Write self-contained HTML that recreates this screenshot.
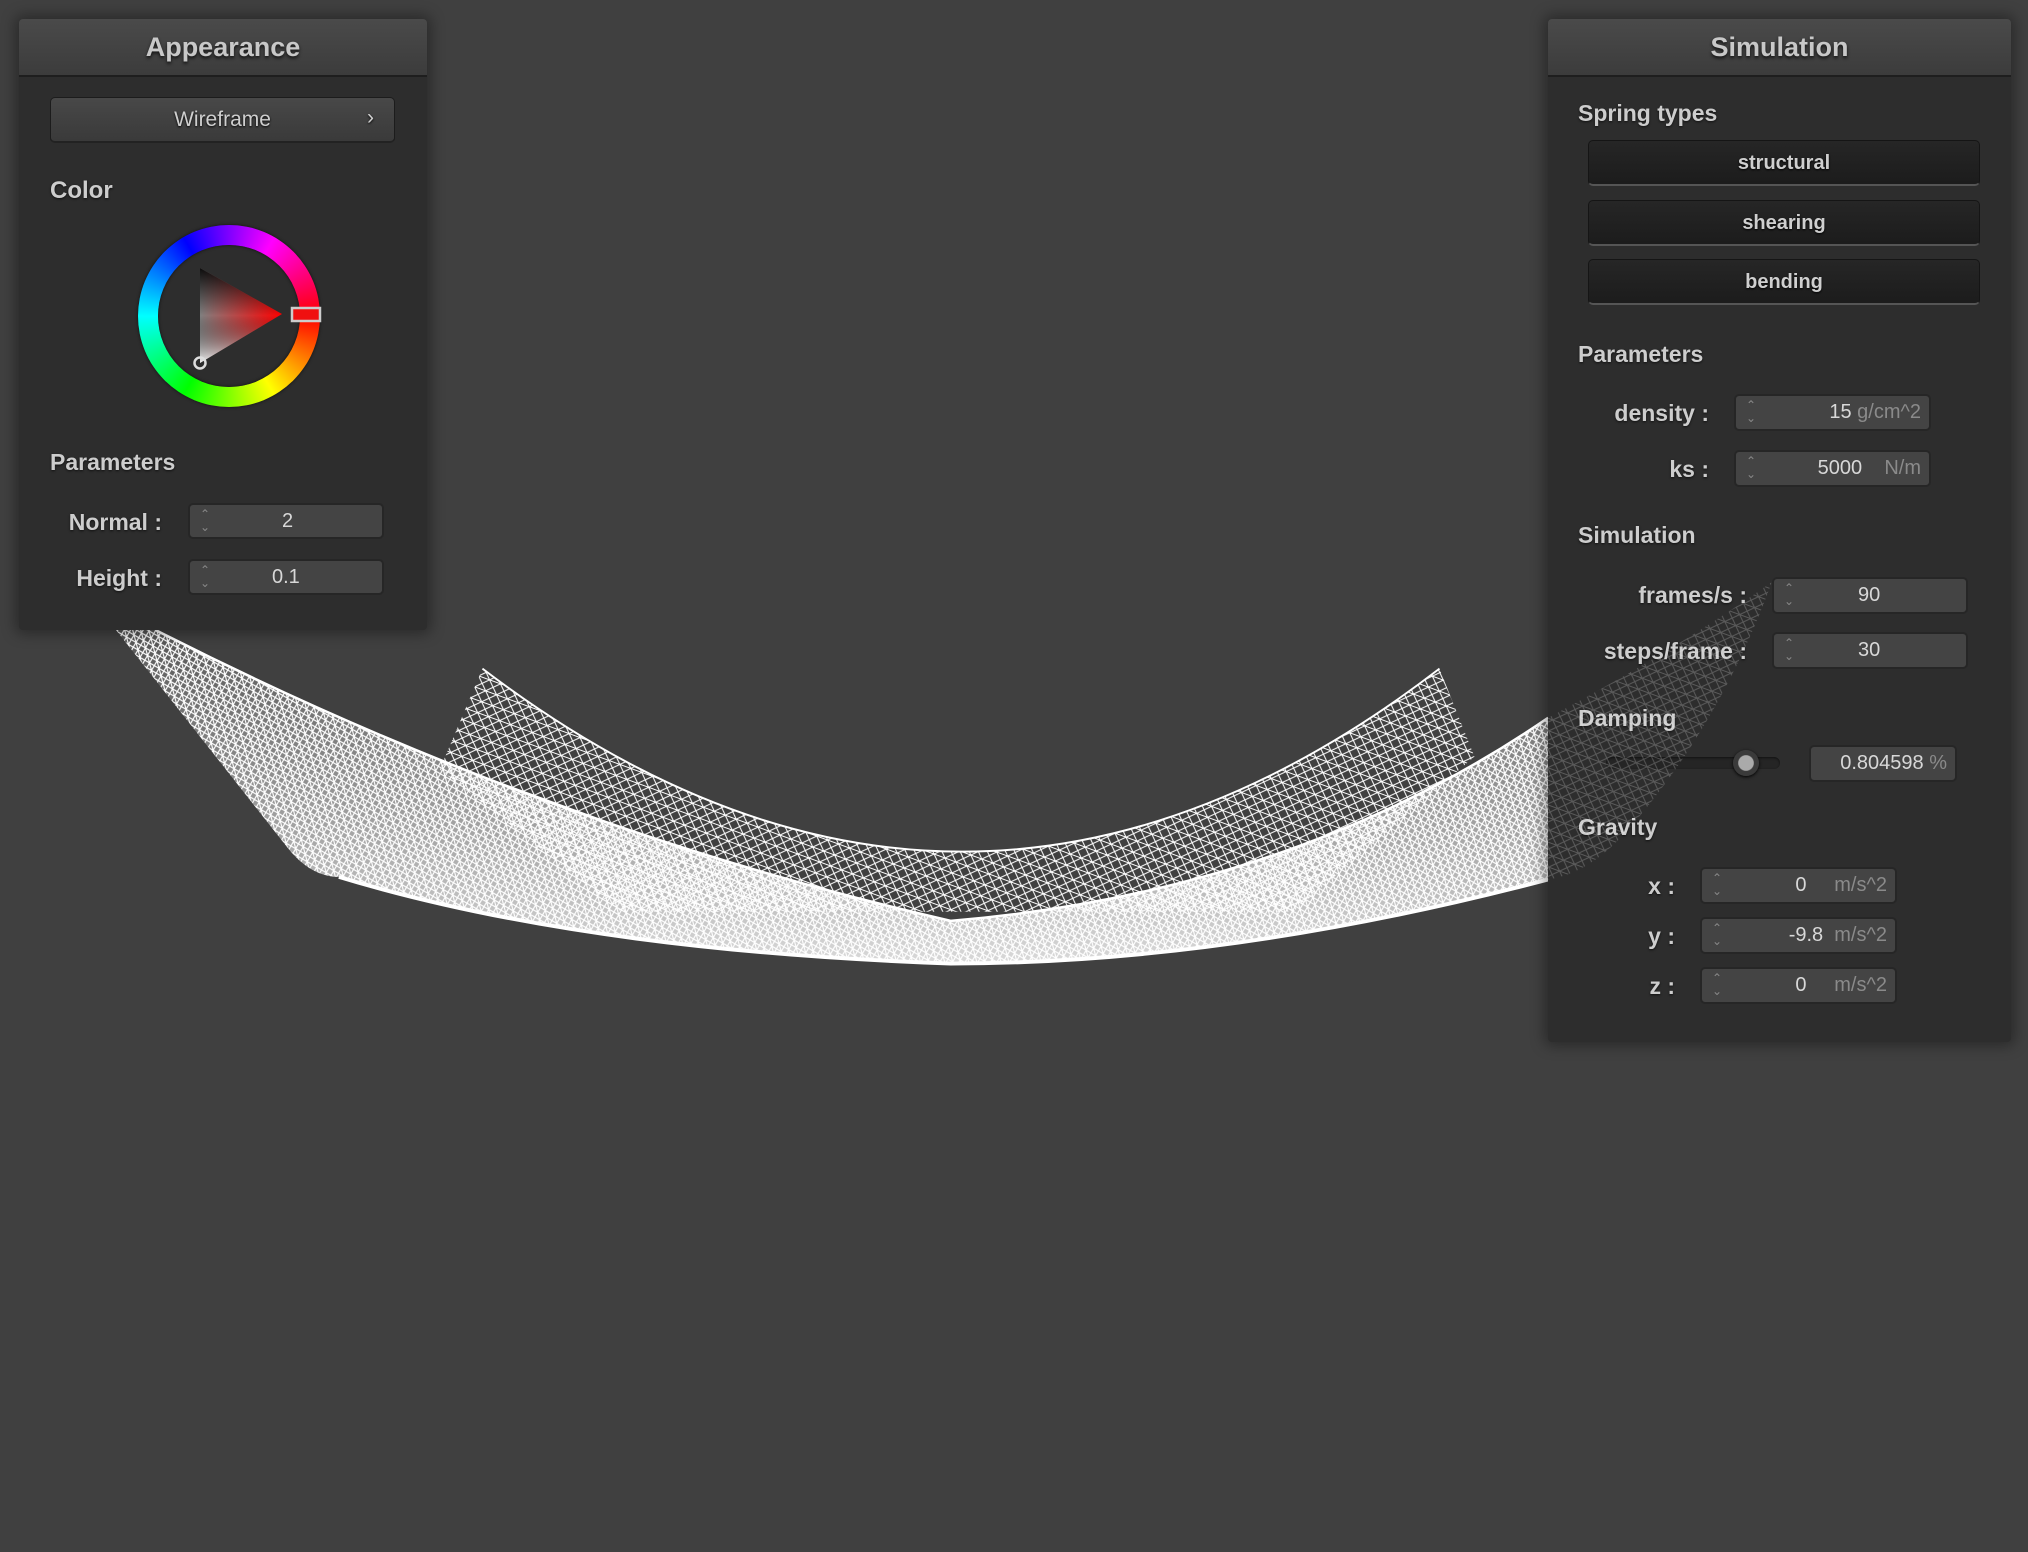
<!DOCTYPE html>
<html><head><meta charset="utf-8"><style>
*{box-sizing:border-box;margin:0;padding:0}
body{width:2028px;height:1552px;background:#404040;position:relative;overflow:hidden;font-family:"Liberation Sans",sans-serif;color:#cfcfcf}
.abs{position:absolute}
.panel{position:absolute;background:#2d2d2d;border-radius:4px;box-shadow:0 0 14px 4px rgba(0,0,0,.35)}
.hdr{position:absolute;left:0;right:0;top:0;height:58px;background:linear-gradient(#4a4a4a,#3c3c3c);border-bottom:2px solid #1e1e1e;border-radius:4px 4px 0 0;text-align:center;font-size:27px;font-weight:bold;line-height:56px;color:#c8c8c8;text-shadow:0 2px 3px #111}
.lbl{position:absolute;font-weight:bold;font-size:23px;color:#cdcdcd;white-space:nowrap;text-shadow:0 1px 2px #111}
.rl{position:absolute;font-weight:bold;font-size:23px;color:#cdcdcd;white-space:nowrap;text-align:right;text-shadow:0 1px 2px #111}
.inp{position:absolute;background:#444;border:2px solid #262626;border-radius:5px;font-size:20px;color:#d8d8d8}
.inp .sp{position:absolute;left:10px;top:3px;font-size:12px;line-height:13px;color:#888}
.inp .v{position:absolute;top:0;bottom:0;display:flex;align-items:center}
.u{color:#8a8a8a}
.btn{position:absolute;background:linear-gradient(#262626,#1c1c1c);border:1px solid #151515;border-bottom:2px solid #555;border-radius:5px;text-align:center;font-size:20px;font-weight:bold;color:#cfcfcf;text-shadow:0 1px 2px #000}
</style></head><body>

<svg class="abs" style="left:0;top:0" width="2028" height="1552" viewBox="0 0 1568 1200">
<defs>
<pattern id="m" width="9" height="9" patternUnits="userSpaceOnUse" patternTransform="rotate(20)">
<path d="M0 0L9 9M9 0L0 9M0 4.5H9" stroke="#fff" stroke-width="0.8" fill="none"/>
</pattern>
<pattern id="m2" width="6" height="6" patternUnits="userSpaceOnUse" patternTransform="rotate(-15)">
<path d="M0 0L6 6M6 0L0 6M3 0V6" stroke="#fff" stroke-width="0.9" fill="none"/>
</pattern>
<linearGradient id="fg" x1="0" y1="0" x2="0" y2="1"><stop offset="0" stop-color="#fff" stop-opacity=".1"/><stop offset="1" stop-color="#fff" stop-opacity=".8"/></linearGradient>
</defs>
<path d="M373,517 Q745,800 1113,517 L1140,585 L1000,705 L480,705 L340,595 Z" fill="url(#m)"/>
<path d="M373,517 Q745,800 1113,517" stroke="#fff" stroke-width="1.5" fill="none"/>
<path d="M88,485 L120,487 Q420,640 735,712 Q1000,690 1197,555 L1197,680 Q950,745 735,745 Q450,735 262,678 Q240,678 222,655 Z" fill="url(#m2)"/>
<path d="M88,485 L120,487 Q420,640 735,712 Q1000,690 1197,555 L1197,680 Q950,745 735,745 Q450,735 262,678 Q240,678 222,655 Z" fill="url(#fg)"/>
<path d="M120,487 Q420,640 735,712 Q1000,690 1197,555" stroke="#fff" stroke-width="2" fill="none"/>
<path d="M262,678 Q450,735 735,745 Q950,745 1197,680" stroke="#fff" stroke-width="3" fill="none"/>
</svg>

<div class="panel" style="left:19px;top:19px;width:408px;height:611px">
<div class="hdr">Appearance</div>
</div>
<div class="btn" style="left:50px;top:97px;width:345px;height:46px;background:linear-gradient(#484848,#3a3a3a);border:1px solid #1c1c1c;border-bottom:2px solid #222;line-height:44px;font-weight:normal;font-size:21px">Wireframe<span style="position:absolute;right:20px;top:-2px">›</span></div>
<div class="lbl" style="left:50px;top:177px;font-size:24px">Color</div>
<div class="abs" style="left:138px;top:225px;width:182px;height:182px;border-radius:50%;background:conic-gradient(from 90deg,#f00,#ff0,#0f0,#0ff,#00f,#f0f,#f00);box-shadow:0 0 3px #111"></div>
<div class="abs" style="left:158px;top:245px;width:142px;height:142px;border-radius:50%;background:#2d2d2d;box-shadow:inset 0 0 3px #111"></div>
<svg class="abs" style="left:0;top:0" width="440" height="440">
<defs>
<linearGradient id="t1" x1="282" y1="314" x2="200" y2="314" gradientUnits="userSpaceOnUse"><stop offset="0" stop-color="#f00"/><stop offset="1" stop-color="#808080"/></linearGradient>
<linearGradient id="t2" x1="0" y1="268" x2="0" y2="363" gradientUnits="userSpaceOnUse"><stop offset="0" stop-color="#000" stop-opacity=".9"/><stop offset=".5" stop-color="#000" stop-opacity="0"/><stop offset="1" stop-color="#fff" stop-opacity=".9"/></linearGradient>
</defs>
<polygon points="282,314 200,268 200,363" fill="url(#t1)"/>
<polygon points="282,314 200,268 200,363" fill="url(#t2)"/>
<rect x="292" y="308" width="28" height="13" fill="#f01010" stroke="#ccc" stroke-width="2.5"/>
<circle cx="200" cy="363" r="5.5" fill="none" stroke="#ddd" stroke-width="2.5"/>
</svg>
<div class="lbl" style="left:50px;top:449px">Parameters</div>
<div class="rl" style="right:1866px;top:509px">Normal :</div>
<div class="inp" style="left:188px;top:503px;width:196px;height:36px"><div class="sp">⌃<br>⌄</div><div class="v" style="left:92px">2</div></div>
<div class="rl" style="right:1866px;top:565px">Height :</div>
<div class="inp" style="left:188px;top:559px;width:196px;height:36px"><div class="sp">⌃<br>⌄</div><div class="v" style="left:82px">0.1</div></div>

<div class="panel" style="left:1548px;top:19px;width:463px;height:1023px">
<div class="hdr">Simulation</div>
</div>
<div class="lbl" style="left:1578px;top:100px">Spring types</div>
<div class="btn" style="left:1588px;top:140px;width:392px;height:46px;line-height:44px">structural</div>
<div class="btn" style="left:1588px;top:200px;width:392px;height:46px;line-height:44px">shearing</div>
<div class="btn" style="left:1588px;top:259px;width:392px;height:46px;line-height:44px">bending</div>
<div class="lbl" style="left:1578px;top:341px">Parameters</div>
<div class="rl" style="right:319px;top:400px">density :</div>
<div class="inp" style="left:1734px;top:394px;width:197px;height:37px"><div class="sp">⌃<br>⌄</div><div class="v" style="right:8px">15&nbsp;<span class="u">g/cm^2</span></div></div>
<div class="rl" style="right:319px;top:456px">ks :</div>
<div class="inp" style="left:1734px;top:450px;width:197px;height:37px"><div class="sp">⌃<br>⌄</div><div class="v" style="right:8px">5000&nbsp;&nbsp;&nbsp;&nbsp;<span class="u">N/m</span></div></div>
<div class="lbl" style="left:1578px;top:522px">Simulation</div>
<div class="rl" style="right:281px;top:582px">frames/s :</div>
<div class="inp" style="left:1772px;top:577px;width:196px;height:37px"><div class="sp">⌃<br>⌄</div><div class="v" style="left:84px">90</div></div>
<div class="rl" style="right:281px;top:638px">steps/frame :</div>
<div class="inp" style="left:1772px;top:632px;width:196px;height:37px"><div class="sp">⌃<br>⌄</div><div class="v" style="left:84px">30</div></div>
<div class="lbl" style="left:1578px;top:705px">Damping</div>
<div class="abs" style="left:1606px;top:757px;width:174px;height:12px;background:#252525;border-radius:6px;box-shadow:inset 0 1px 2px #111"></div>
<div class="abs" style="left:1733px;top:750px;width:26px;height:26px;border-radius:50%;background:radial-gradient(#aaa 0 40%,#3a3a3a 45%);box-shadow:0 1px 3px #000"></div>
<div class="inp" style="left:1809px;top:745px;width:148px;height:37px"><div class="v" style="right:8px">0.804598&nbsp;<span class="u">%</span></div></div>
<div class="lbl" style="left:1578px;top:814px">Gravity</div>
<div class="rl" style="right:353px;top:873px">x :</div>
<div class="inp" style="left:1700px;top:867px;width:197px;height:37px"><div class="sp">⌃<br>⌄</div><div class="v" style="right:8px">0&nbsp;&nbsp;&nbsp;&nbsp;&nbsp;<span class="u">m/s^2</span></div></div>
<div class="rl" style="right:353px;top:923px">y :</div>
<div class="inp" style="left:1700px;top:917px;width:197px;height:37px"><div class="sp">⌃<br>⌄</div><div class="v" style="right:8px">-9.8&nbsp;&nbsp;<span class="u">m/s^2</span></div></div>
<div class="rl" style="right:353px;top:973px">z :</div>
<div class="inp" style="left:1700px;top:967px;width:197px;height:37px"><div class="sp">⌃<br>⌄</div><div class="v" style="right:8px">0&nbsp;&nbsp;&nbsp;&nbsp;&nbsp;<span class="u">m/s^2</span></div></div>

<svg class="abs" style="left:0;top:0;opacity:.22" width="2028" height="1552" viewBox="0 0 1568 1200">
<path d="M1197,555 Q1300,500 1370,450 Q1330,560 1260,640 Q1230,675 1197,680 Z" fill="url(#m)"/>
</svg>
</body></html>
